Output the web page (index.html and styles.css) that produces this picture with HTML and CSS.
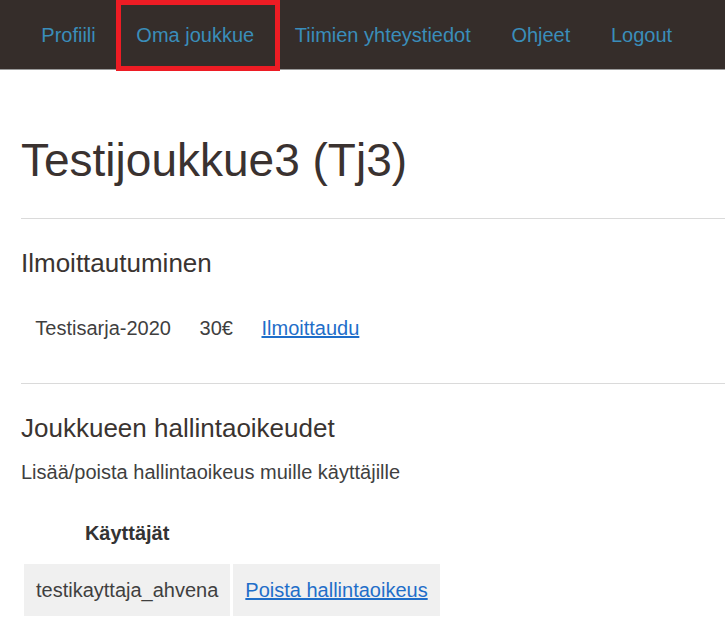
FILE: index.html
```html
<!DOCTYPE html>
<html lang="fi">
<head>
<meta charset="utf-8">
<title>Oma joukkue</title>
<link rel="stylesheet" href="styles.css">
</head>
<body>
<nav class="topnav">
  <ul class="nav-list">
    <li><a class="nav-link" href="#">Profiili</a></li>
    <li><a class="nav-link" href="#">Oma joukkue</a></li>
    <li><a class="nav-link" href="#">Tiimien yhteystiedot</a></li>
    <li><a class="nav-link" href="#">Ohjeet</a></li>
    <li><a class="nav-link" href="#">Logout</a></li>
  </ul>
  <div class="highlight"></div>
</nav>
<main class="content">
  <h1 class="title">Testijoukkue3 (Tj3)</h1>
  <hr class="divider">
  <h3 class="section-title">Ilmoittautuminen</h3>
  <table class="reg-table">
    <tr>
      <td>Testisarja-2020</td>
      <td>30€</td>
      <td><a class="link" href="#">Ilmoittaudu</a></td>
    </tr>
  </table>
  <hr class="divider">
  <h3 class="section-title">Joukkueen hallintaoikeudet</h3>
  <p class="desc">Lisää/poista hallintaoikeus muille käyttäjille</p>
  <table class="admin-table">
    <tr>
      <th>Käyttäjät</th>
      <th></th>
    </tr>
    <tr>
      <td>testikayttaja_ahvena</td>
      <td><a class="link" href="#">Poista hallintaoikeus</a></td>
    </tr>
  </table>
</main>
</body>
</html>
```
FILE: styles.css
```css
html, body {
  margin: 0;
  padding: 0;
  background: #ffffff;
  font-family: "Liberation Sans", Arial, sans-serif;
  color: #3a3431;
}

.topnav {
  position: relative;
  height: 69px;
  background: #352d2a;
  border-bottom: 1px solid #9a9a9a;
  display: flex;
  align-items: center;
}

.nav-list {
  list-style: none;
  margin: 0;
  padding: 0 0 0 21px;
  display: flex;
}

.nav-link {
  display: block;
  padding: 0 20.3px;
  font-size: 20px;
  line-height: 24px;
  color: #3a8dba;
  text-decoration: none;
}

.highlight {
  position: absolute;
  left: 116px;
  top: 0;
  width: 164px;
  height: 71px;
  box-sizing: border-box;
  border: 5px solid #ed1c24;
}

.content {
  padding-left: 21px;
}

.title {
  margin: 65px 0 0 0;
  font-size: 46px;
  line-height: 50px;
  font-weight: normal;
  color: #3a3230;
}

.divider {
  margin: 33px 0 0 0;
  border: 0;
  border-top: 1px solid #dadada;
  height: 0;
}

.section-title {
  margin: 29px 0 0 0;
  font-size: 26px;
  line-height: 30px;
  font-weight: normal;
  color: #3a3431;
}

.reg-table {
  margin-top: 30px;
  border-collapse: collapse;
  font-size: 20px;
  line-height: 24px;
  color: #3f3f3f;
}

.reg-table td {
  padding: 8px 14.3px;
}

.reg-table + .divider {
  margin-top: 35px;
}

.desc {
  margin: 17px 0 0 0;
  font-size: 20px;
  line-height: 24px;
  color: #3f3f3f;
}

.admin-table {
  margin-top: 22px;
  border-collapse: separate;
  border-spacing: 3px;
  font-size: 20px;
  line-height: 24px;
  color: #3f3f3f;
}

.admin-table th {
  padding: 12px 12px 16px;
  font-weight: bold;
  text-align: center;
  color: #333333;
}

.admin-table td {
  padding: 14px 12px;
  background: #f0f0f0;
}

.link {
  color: #1f6ec9;
  text-decoration: underline;
}
```
